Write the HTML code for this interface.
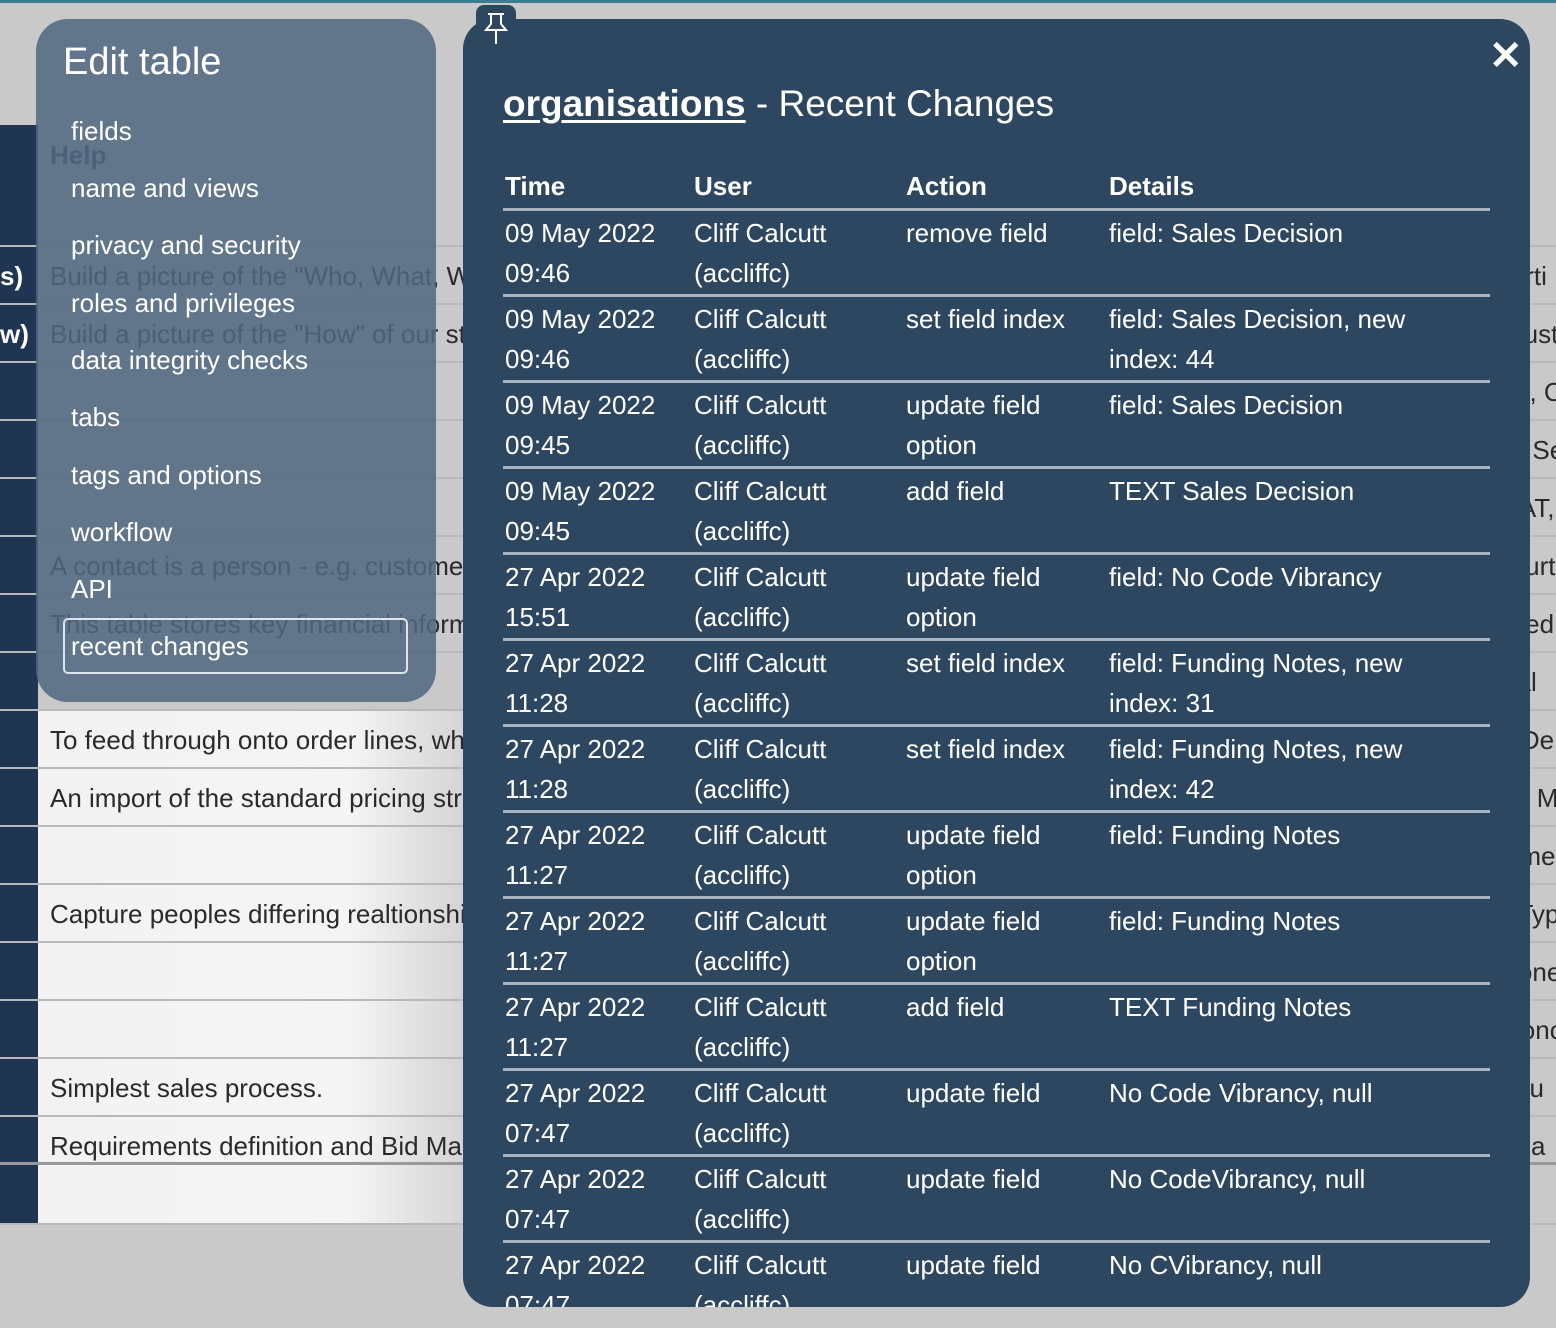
<!DOCTYPE html>
<html><head><meta charset="utf-8"><style>
*{margin:0;padding:0;box-sizing:border-box}
html,body{width:1556px;height:1328px;overflow:hidden}
body{background:#c9c9c9;font-family:"Liberation Sans",sans-serif;position:relative}
#wrap{position:absolute;left:0;top:0;width:1556px;height:1328px;overflow:hidden}
.abs{position:absolute}
.stripe{left:0;top:0;width:1556px;height:3px;background:#3b7e92}
.navcol{left:0;top:125px;width:38px;height:1100px;background:#1f3551}
.row{position:absolute;left:0;width:1556px;height:58px;border-bottom:2px solid #b9b9b9}
.bgt{position:absolute;font-size:26px;color:#2a2a2a;white-space:nowrap}
.panel{left:36px;top:19px;width:400px;height:683px;background:rgba(80,104,128,0.86);border-radius:32px}
.panel .t{position:absolute;left:27px;top:22px;font-size:38px;color:#fff}
.panel .m{position:absolute;left:35px;font-size:26px;color:#fff;white-space:nowrap}
.rc{position:absolute;left:27px;top:599px;width:345px;height:56px;border:2px solid #dfe4ea;border-radius:5px}
.modal{left:463px;top:19px;width:1067px;height:1288px;background:#2e4761;border-radius:30px;overflow:hidden;color:#fff}
.pin{left:476px;top:5px;width:40px;height:46px;background:#2e4761;border-radius:8px 8px 0 0;z-index:5}
h1{position:absolute;left:40px;top:64px;font-size:37px;font-weight:normal;white-space:nowrap}
h1 b{text-decoration:underline;text-decoration-thickness:3px;text-underline-offset:4px}
.hdr{position:absolute;top:152px;font-size:26px;font-weight:bold}
.line{position:absolute;left:40px;width:987px;height:3px;background:#a9b4c0}
.c{position:absolute;font-size:26px;line-height:40px;white-space:nowrap}
.x{position:absolute;left:1026px;top:14px;font-size:40px;font-weight:bold}
</style></head><body><div id="wrap">
<div class="abs stripe"></div>
<div class="abs navcol"></div>
<div class="abs" style="left:38px;top:711px;width:440px;height:514px;background:linear-gradient(90deg,#f2f2f2 0%,#f5f5f5 70%,#d0d0d0 100%)"></div>
<div class="abs" style="left:0;top:1225px;width:1556px;height:103px;background:#c9c9c9"></div>
<div class="row" style="top:189px;height:58px"></div>
<div class="row" style="top:247px"></div><div class="row" style="top:305px"></div><div class="row" style="top:363px"></div><div class="row" style="top:421px"></div><div class="row" style="top:479px"></div><div class="row" style="top:537px"></div><div class="row" style="top:595px"></div><div class="row" style="top:653px"></div><div class="row" style="top:711px"></div><div class="row" style="top:769px"></div><div class="row" style="top:827px"></div><div class="row" style="top:885px"></div><div class="row" style="top:943px"></div><div class="row" style="top:1001px"></div><div class="row" style="top:1059px"></div><div class="row" style="top:1107px;height:58px;border-bottom:3px solid #999"></div><div class="row" style="top:1167px"></div>
<div class="bgt" style="left:0;top:261px;color:#fff;font-weight:bold">s)</div>
<div class="bgt" style="left:0;top:319px;color:#fff;font-weight:bold">w)</div>
<div class="bgt" style="left:50px;top:140px;font-weight:bold;color:#2c3e55">Help</div>
<div class="bgt" style="left:50px;top:261px">Build a picture of the "Who, What, Why, Whe...</div>
<div class="bgt" style="left:50px;top:319px">Build a picture of the "How" of our strategic ...</div>
<div class="bgt" style="left:50px;top:551px">A contact is a person - e.g. customer or sup...</div>
<div class="bgt" style="left:50px;top:609px">This table stores key financial information fro...</div>
<div class="bgt" style="left:50px;top:725px">To feed through onto order lines, which will...</div>
<div class="bgt" style="left:50px;top:783px">An import of the standard pricing structures....</div>
<div class="bgt" style="left:50px;top:899px">Capture peoples differing realtionships with...</div>
<div class="bgt" style="left:50px;top:1073px">Simplest sales process.</div>
<div class="bgt" style="left:50px;top:1131px">Requirements definition and Bid Management</div>
<div class="bgt" style="left:1450px;top:140px;font-weight:bold;color:#2c3e55">Fields</div>
<div class="bgt" style="left:1450px;top:261px">Supporti</div>
<div class="bgt" style="left:1450px;top:319px">P1 - Cust</div>
<div class="bgt" style="left:1450px;top:377px">Details, C</div>
<div class="bgt" style="left:1450px;top:435px">Sector Se</div>
<div class="bgt" style="left:1450px;top:493px">Add VAT,</div>
<div class="bgt" style="left:1450px;top:551px">Site, Furt</div>
<div class="bgt" style="left:1450px;top:609px">Retained</div>
<div class="bgt" style="left:1450px;top:667px">Internal</div>
<div class="bgt" style="left:1450px;top:725px">Type, De</div>
<div class="bgt" style="left:1450px;top:783px">Factor, M</div>
<div class="bgt" style="left:1450px;top:841px">Outcome</div>
<div class="bgt" style="left:1450px;top:899px">Role, Typ</div>
<div class="bgt" style="left:1450px;top:957px">Milestone</div>
<div class="bgt" style="left:1450px;top:1015px">Key Conc</div>
<div class="bgt" style="left:1450px;top:1073px">Opportu</div>
<div class="bgt" style="left:1450px;top:1131px">Potentia</div>

<div class="abs panel">
<div class="t">Edit table</div>
<div class="m" style="top:97px">fields</div>
<div class="m" style="top:154px">name and views</div>
<div class="m" style="top:211px">privacy and security</div>
<div class="m" style="top:269px">roles and privileges</div>
<div class="m" style="top:326px">data integrity checks</div>
<div class="m" style="top:383px">tabs</div>
<div class="m" style="top:441px">tags and options</div>
<div class="m" style="top:498px">workflow</div>
<div class="m" style="top:555px">API</div>
<div class="rc"></div>
<div class="m" style="top:612px">recent changes</div>
</div>

<div class="abs modal">
<div class="x">✕</div>
<h1><b>organisations</b> - Recent Changes</h1>
<div class="hdr" style="left:42px">Time</div>
<div class="hdr" style="left:231px">User</div>
<div class="hdr" style="left:443px">Action</div>
<div class="hdr" style="left:646px">Details</div>
<div class="line" style="top:189px"></div>
<div id="rows"></div>
</div>
<div class="abs pin"><svg width="40" height="46" viewBox="0 0 40 46"><path d="M12 9h16M15 9v10l-5 6h20l-5-6V9M20 25v14" fill="none" stroke="#fff" stroke-width="2"/></svg></div>
</div>
<script>
var d=[["09 May 2022","09:46","remove field","","field: Sales Decision",""],
["09 May 2022","09:46","set field index","","field: Sales Decision, new","index: 44"],
["09 May 2022","09:45","update field","option","field: Sales Decision",""],
["09 May 2022","09:45","add field","","TEXT Sales Decision",""],
["27 Apr 2022","15:51","update field","option","field: No Code Vibrancy",""],
["27 Apr 2022","11:28","set field index","","field: Funding Notes, new","index: 31"],
["27 Apr 2022","11:28","set field index","","field: Funding Notes, new","index: 42"],
["27 Apr 2022","11:27","update field","option","field: Funding Notes",""],
["27 Apr 2022","11:27","update field","option","field: Funding Notes",""],
["27 Apr 2022","11:27","add field","","TEXT Funding Notes",""],
["27 Apr 2022","07:47","update field","","No Code Vibrancy, null",""],
["27 Apr 2022","07:47","update field","","No CodeVibrancy, null",""],
["27 Apr 2022","07:47","update field","","No CVibrancy, null",""]];
var h="";
d.forEach(function(r,i){var y=194+i*86;
h+='<div class="c" style="left:42px;top:'+y+'px">'+r[0]+'<br>'+r[1]+'</div>';
h+='<div class="c" style="left:231px;top:'+y+'px">Cliff Calcutt<br>(accliffc)</div>';
h+='<div class="c" style="left:443px;top:'+y+'px">'+r[2]+'<br>'+r[3]+'</div>';
h+='<div class="c" style="left:646px;top:'+y+'px">'+r[4]+'<br>'+r[5]+'</div>';
if(i<12)h+='<div class="line" style="top:'+(275+i*86)+'px"></div>';});
document.getElementById("rows").innerHTML=h;
</script>
</body></html>
